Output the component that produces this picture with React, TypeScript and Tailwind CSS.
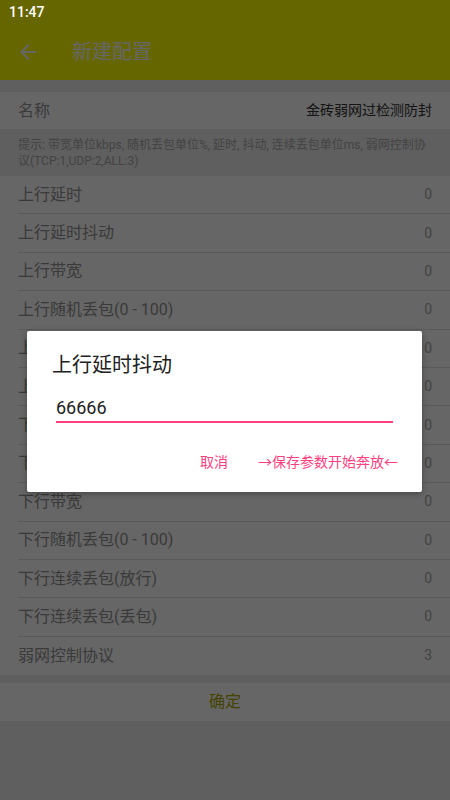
import React from "react";

const rows: { label: string; value: string }[] = [
  { label: "上行延时", value: "0" },
  { label: "上行延时抖动", value: "0" },
  { label: "上行带宽", value: "0" },
  { label: "上行随机丢包(0 - 100)", value: "0" },
  { label: "上行连续丢包(放行)", value: "0" },
  { label: "上行连续丢包(丢包)", value: "0" },
  { label: "下行延时", value: "0" },
  { label: "下行延时抖动", value: "0" },
  { label: "下行带宽", value: "0" },
  { label: "下行随机丢包(0 - 100)", value: "0" },
  { label: "下行连续丢包(放行)", value: "0" },
  { label: "下行连续丢包(丢包)", value: "0" },
  { label: "弱网控制协议", value: "3" },
];

export default function App() {
  return (
    <div
      className="relative w-[450px] h-[800px] overflow-hidden bg-[#eeeeee]"
      style={{ fontFamily: 'Roboto, "Noto Sans CJK SC", sans-serif' }}
    >
      {/* Status bar (not dimmed) */}
      <div className="relative z-30 h-6 bg-[#666600] flex items-center pl-[9px]">
        <span className="text-white text-[14px] font-medium leading-none">11:47</span>
      </div>

      {/* Toolbar */}
      <div className="h-14 bg-[#ffff00] flex items-center">
        <svg viewBox="0 0 24 24" className="w-6 h-6 ml-4 fill-white">
          <path d="M20 11H7.83l5.59-5.59L12 4l-8 8 8 8 1.41-1.41L7.83 13H20v-2z" />
        </svg>
        <span className="ml-8 text-white text-[20px] leading-none">新建配置</span>
      </div>

      <div className="h-3" />

      {/* Name row */}
      <div className="h-[37px] bg-white flex items-center justify-between px-[18px]">
        <span className="text-[16px] text-[#949494]">名称</span>
        <span className="text-[14px] text-[#333333]">金砖弱网过检测防封</span>
      </div>

      {/* Hint */}
      <div className="h-[47px] px-[18px] pt-[8px] text-[12px] leading-[16px] text-[#a8a8a8]">
        提示: 带宽单位kbps, 随机丢包单位%, 延时, 抖动, 连续丢包单位ms, 弱网控制协议(TCP:1,UDP:2,ALL:3)
      </div>

      {/* Param list */}
      <div className="bg-white">
        {rows.map((r, i) => (
          <div key={i} className="pl-[18px]">
            <div
              className={`h-[38.4px] flex items-center justify-between pr-[18px] ${
                i < rows.length - 1 ? "border-b border-[#e0e0e0]" : ""
              }`}
            >
              <span className="text-[16px] text-[#929292]">{r.label}</span>
              <span className="text-[14px] text-[#a8a8a8]">{r.value}</span>
            </div>
          </div>
        ))}
      </div>

      <div className="h-2" />

      {/* Confirm */}
      <div className="h-[38px] bg-white flex items-center justify-center">
        <span className="text-[16px] text-[#aaaa00]">确定</span>
      </div>

      {/* Dim overlay */}
      <div className="absolute inset-0 z-10 bg-black/60" />

      {/* Dialog */}
      <div className="absolute z-20 left-[27px] top-[331px] w-[395px] h-[161px] bg-white rounded-[2px] shadow-[0_2px_6px_rgba(0,0,0,0.3)]">
        <div className="pl-[25px] pt-[20px] text-[20px] leading-[28px] text-[#212121]">上行延时抖动</div>
        <div className="mx-[29px] mt-[17px] border-b-2 border-[#ff4081]">
          <span className="text-[18px] leading-[24px] text-[#212121]">66666</span>
        </div>
        <div className="flex justify-end items-center gap-[30px] pr-[24px] mt-[29px] text-[14px] leading-[20px] text-[#ff4081]">
          <span>取消</span>
          <span>→保存参数开始奔放←</span>
        </div>
      </div>
    </div>
  );
}
